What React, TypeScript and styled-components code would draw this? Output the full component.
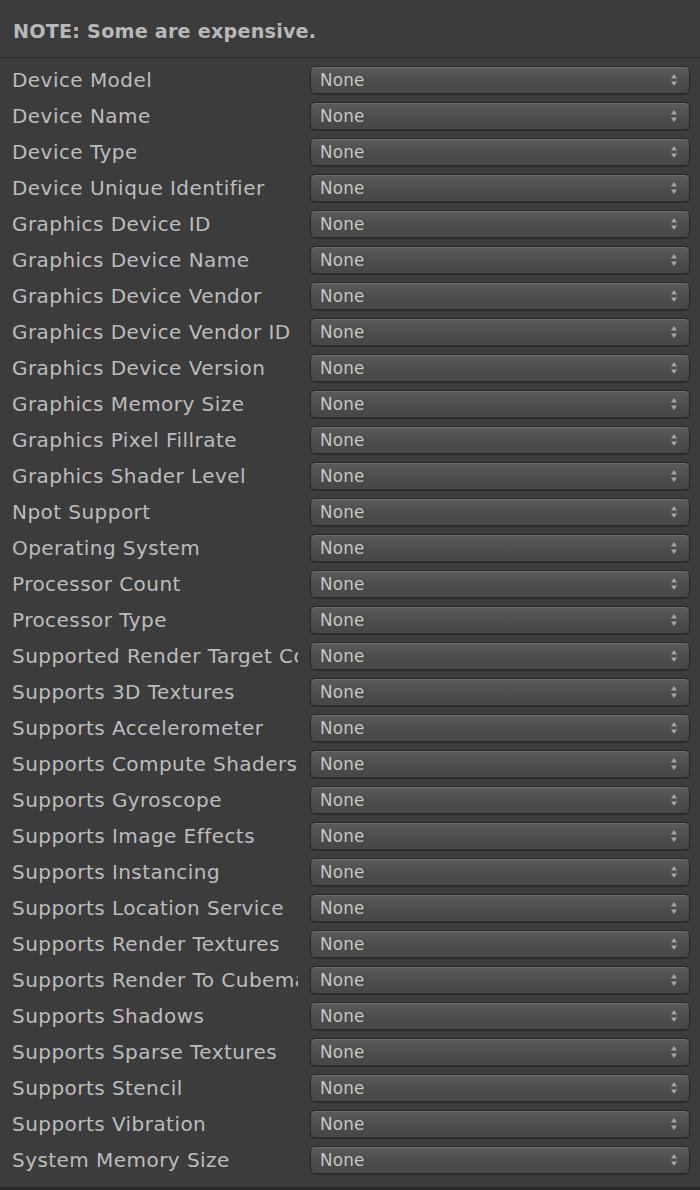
import React from "react";
import styled, { createGlobalStyle } from "styled-components";

const GlobalStyle = createGlobalStyle`
  html, body {
    margin: 0;
    padding: 0;
    background: #3c3c3c;
  }
  body {
    font-family: "DejaVu Sans", "Liberation Sans", sans-serif;
  }
`;

const Panel = styled.div`
  width: 700px;
  height: 1190px;
  background: #3c3c3c;
  display: flex;
  flex-direction: column;
  box-sizing: border-box;
  border-bottom: 3px solid #2b2b2b;
  overflow: hidden;
`;

const Header = styled.div`
  height: 58px;
  box-sizing: border-box;
  padding: 5px 13px 0;
  display: flex;
  align-items: center;
  border-bottom: 1px solid #2d2d2d;
  font-weight: bold;
  font-size: 19.2px;
  color: #b8b8b8;
  letter-spacing: 0.2px;
`;

const List = styled.div`
  display: flex;
  flex-direction: column;
  padding-top: 4px;
`;

const Row = styled.div`
  height: 36px;
  display: grid;
  grid-template-columns: 286px 380px;
  column-gap: 12px;
  padding-left: 12px;
  align-items: center;
`;

const Label = styled.div`
  font-size: 20px;
  color: #bcbcbc;
  white-space: nowrap;
  overflow: hidden;
  text-overflow: clip;
  letter-spacing: 0.45px;
`;

const Select = styled.div`
  height: 28px;
  box-sizing: border-box;
  border: 1px solid #282828;
  border-radius: 5px;
  background: linear-gradient(#5c5c5c, #4d4d4d 50%, #464646);
  box-shadow: inset 0 1px 0 #6c6c6c, 0 1px 1px rgba(0, 0, 0, 0.25);
  display: flex;
  align-items: center;
  justify-content: space-between;
  padding: 0 11px 0 9px;
`;

const SelectText = styled.span`
  font-size: 16.8px;
  color: #c6c6c6;
  letter-spacing: 0.2px;
`;

const Arrows = () => (
  <svg width="8" height="14" viewBox="0 0 8 14">
    <path d="M4 1 L7 5.5 L1 5.5 Z" fill="#a6a6a6" />
    <path d="M4 13 L7 8.5 L1 8.5 Z" fill="#a6a6a6" />
  </svg>
);

const labels = [
  "Device Model",
  "Device Name",
  "Device Type",
  "Device Unique Identifier",
  "Graphics Device ID",
  "Graphics Device Name",
  "Graphics Device Vendor",
  "Graphics Device Vendor ID",
  "Graphics Device Version",
  "Graphics Memory Size",
  "Graphics Pixel Fillrate",
  "Graphics Shader Level",
  "Npot Support",
  "Operating System",
  "Processor Count",
  "Processor Type",
  "Supported Render Target Count",
  "Supports 3D Textures",
  "Supports Accelerometer",
  "Supports Compute Shaders",
  "Supports Gyroscope",
  "Supports Image Effects",
  "Supports Instancing",
  "Supports Location Service",
  "Supports Render Textures",
  "Supports Render To Cubemap",
  "Supports Shadows",
  "Supports Sparse Textures",
  "Supports Stencil",
  "Supports Vibration",
  "System Memory Size",
];

export default function App() {
  return (
    <>
      <GlobalStyle />
      <Panel>
        <Header>NOTE: Some are expensive.</Header>
        <List>
          {labels.map((l) => (
            <Row key={l}>
              <Label>{l}</Label>
              <Select>
                <SelectText>None</SelectText>
                <Arrows />
              </Select>
            </Row>
          ))}
        </List>
      </Panel>
    </>
  );
}
